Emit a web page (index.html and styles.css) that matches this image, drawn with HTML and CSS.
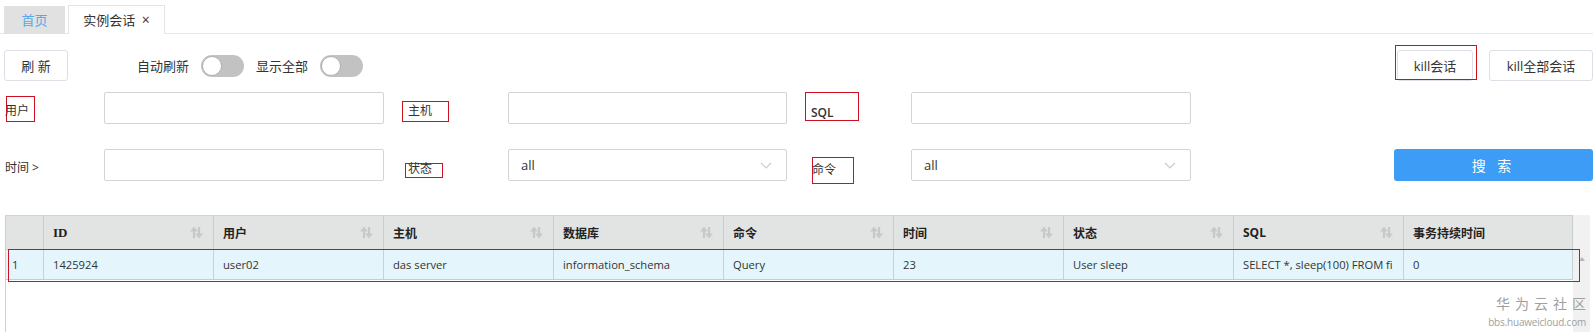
FILE: index.html
```html
<!DOCTYPE html>
<html lang="zh-CN">
<head>
    <meta charset="UTF-8">
    <title>实例会话</title>
    <link rel="stylesheet" href="styles.css">
</head>
<body>

    <!-- Tabs -->
    <div class="tabs">
        <div class="tab tab-home">首页</div>
        <div class="tab tab-active">实例会话 <span class="tab-close">×</span></div>
    </div>

    <!-- Toolbar -->
    <div class="toolbar">
        <button class="btn btn-refresh">刷 新</button>
        <div class="switches">
            <span class="switch-label">自动刷新</span>
            <span class="switch"><span class="knob"></span></span>
            <span class="switch-label">显示全部</span>
            <span class="switch"><span class="knob"></span></span>
        </div>
        <div class="toolbar-right">
            <span class="marked"><button class="btn btn-kill">kill会话</button></span>
            <button class="btn btn-kill-all">kill全部会话</button>
        </div>
    </div>

    <!-- Filters -->
    <div class="filters">
        <div class="filter-row">
            <div class="label-cell first"><span class="label mark lbl-user">用户</span></div>
            <input class="field" type="text">
            <div class="label-cell"><span class="label mark lbl-host">主机</span></div>
            <input class="field field-mid" type="text">
            <div class="label-cell"><span class="label mark lbl-sql">SQL</span></div>
            <input class="field" type="text">
        </div>
        <div class="filter-row">
            <div class="label-cell first"><span class="label lbl-time">时间 &gt;</span></div>
            <input class="field" type="text">
            <div class="label-cell"><span class="label mark lbl-state">状态</span></div>
            <div class="select field-mid"><span>all</span><svg class="chevron" width="12" height="7" viewBox="0 0 12 7"><path d="M1 1 L6 6 L11 1" fill="none" stroke="#c8cbd0" stroke-width="1.2"/></svg></div>
            <div class="label-cell"><span class="label mark lbl-cmd">命令</span></div>
            <div class="select"><span>all</span><svg class="chevron" width="12" height="7" viewBox="0 0 12 7"><path d="M1 1 L6 6 L11 1" fill="none" stroke="#c8cbd0" stroke-width="1.2"/></svg></div>
            <button class="btn-search">搜 索</button>
        </div>
    </div>

    <!-- Sessions table -->
    <div class="grid-wrap">
        <div class="grid">
            <div class="grid-row grid-head">
                <div class="cell"></div>
                <div class="cell sortable id-head">ID</div>
                <div class="cell sortable">用户</div>
                <div class="cell sortable">主机</div>
                <div class="cell sortable">数据库</div>
                <div class="cell sortable">命令</div>
                <div class="cell sortable">时间</div>
                <div class="cell sortable">状态</div>
                <div class="cell sortable">SQL</div>
                <div class="cell">事务持续时间</div>
            </div>
            <div class="grid-row grid-data">
                <div class="cell num">1</div>
                <div class="cell">1425924</div>
                <div class="cell">user02</div>
                <div class="cell">das server</div>
                <div class="cell">information_schema</div>
                <div class="cell">Query</div>
                <div class="cell">23</div>
                <div class="cell">User sleep</div>
                <div class="cell">SELECT *, sleep(100) FROM fi</div>
                <div class="cell">0</div>
            </div>
        </div>
        <div class="scrollbar"><span class="scroll-up"></span></div>
        <div class="watermark">
            <div class="wm-title">华为云社区</div>
            <div class="wm-url">bbs.huaweicloud.com</div>
        </div>
    </div>

    <script>
        // sort icons for sortable headers
        var icon = '<svg class="sort-icon" width="13" height="13" viewBox="0 0 13 13">' +
            '<path d="M4 4 V12" stroke="#c8c8c8" stroke-width="2.2"/><path d="M4 0.5 L0 5.5 H8 Z" fill="#c8c8c8"/>' +
            '<path d="M9 1 V9" stroke="#c8c8c8" stroke-width="2.2"/><path d="M9 12.5 L5 7.5 H13 Z" fill="#c8c8c8"/></svg>';
        document.querySelectorAll('.sortable').forEach(function (el) {
            el.insertAdjacentHTML('beforeend', icon);
        });
    </script>

</body>
</html>
```

FILE: styles.css
```css
/* Global */
body {
    margin: 0;
    padding: 0;
    font-family: "Open Sans", "Noto Sans CJK SC", sans-serif;
    font-size: 12px;
    color: #333;
    background: #fff;
}

button, input {
    font-family: inherit;
}

/* Tabs */
.tabs {
    display: flex;
    align-items: flex-end;
    height: 28px;
    padding: 5px 0 0 4px;
    margin-right: 3px;
    border-bottom: 1px solid #e6e6e6;
}

.tab {
    height: 28px;
    line-height: 28px;
    font-size: 13px;
    text-align: center;
    box-sizing: border-box;
    margin-bottom: -1px;
}

.tab-home {
    width: 61px;
    height: 28px;
    background: #e1e1e1;
    color: #5aa7e8;
}

.tab-active {
    width: 97px;
    height: 29px;
    margin-left: 3px;
    background: #fff;
    border: 1px solid #e4e4e4;
    border-bottom: none;
    color: #333;
}

.tab-close {
    margin-left: 3px;
    font-size: 14px;
}

/* Toolbar */
.toolbar {
    display: flex;
    align-items: center;
    height: 31px;
    margin-top: 16px;
    padding: 0 3px 0 4px;
}

.btn {
    height: 31px;
    background: #fff;
    border: 1px solid #dcdfe6;
    border-radius: 3px;
    color: #333;
    font-size: 13px;
    padding: 0;
    cursor: pointer;
}

.btn-refresh {
    width: 64px;
}

.switches {
    display: flex;
    align-items: center;
    margin-left: 69px;
}

.switch-label {
    font-size: 13px;
    margin-right: 12px;
}

.switch {
    position: relative;
    width: 43px;
    height: 22px;
    border-radius: 11px;
    background: #c2c2c2;
    margin-right: 12px;
}

.knob {
    position: absolute;
    top: 1px;
    left: 1px;
    width: 20px;
    height: 20px;
    box-sizing: border-box;
    border-radius: 50%;
    border: 1px solid #b0b0b0;
    background: #fff;
}

.toolbar-right {
    display: flex;
    align-items: center;
    margin-left: auto;
}

.marked {
    position: relative;
    display: flex;
}

.marked::after {
    content: "";
    position: absolute;
    left: -2px;
    top: -5px;
    right: -4px;
    bottom: 1px;
    border: 1px solid #cc1122;
}

.btn-kill {
    width: 76px;
}

.btn-kill-all {
    width: 104px;
    margin-left: 16px;
}

/* Filters */
.filters {
    margin-top: 11px;
    padding: 0 3px 0 4px;
}

.filter-row {
    display: flex;
    align-items: flex-start;
    height: 32px;
}

.filter-row + .filter-row {
    margin-top: 25px;
}

.label-cell {
    width: 124px;
    height: 32px;
    flex-shrink: 0;
}

.label-cell.first {
    width: 100px;
}

.label {
    display: block;
    box-sizing: border-box;
    font-size: 12px;
    line-height: 16px;
    color: #333;
    white-space: nowrap;
}

.mark {
    border: 1px solid #cc1122;
}

.lbl-user {
    width: 29px;
    height: 26px;
    margin: 4px 0 0 2px;
    padding-top: 6px;
    text-indent: -2px;
}

.lbl-host {
    width: 47px;
    height: 21px;
    margin: 9px 0 0 18px;
    padding: 1px 0 0 5px;
}

.lbl-sql {
    width: 54px;
    height: 29px;
    margin-left: 18px;
    padding: 12px 0 0 5px;
    font-weight: 600;
}

.lbl-time {
    margin: 11px 0 0 1px;
}

.lbl-state {
    width: 38px;
    height: 15px;
    margin: 14px 0 0 21px;
    padding-left: 2px;
    line-height: 10px;
}

.lbl-cmd {
    width: 42px;
    height: 27px;
    margin: 8px 0 0 25px;
    padding-top: 4px;
    text-indent: -1px;
}

.field {
    width: 280px;
    height: 32px;
    box-sizing: border-box;
    border: 1px solid #d4d4d4;
    border-radius: 2px;
    padding: 0 10px;
    flex-shrink: 0;
}

.field-mid {
    width: 279px;
}

.select {
    display: flex;
    align-items: center;
    justify-content: space-between;
    width: 280px;
    height: 32px;
    box-sizing: border-box;
    border: 1px solid #d4d4d4;
    border-radius: 2px;
    padding: 0 14px 0 12px;
    font-size: 13px;
    flex-shrink: 0;
}

.select.field-mid {
    width: 279px;
}

.btn-search {
    width: 199px;
    height: 32px;
    margin-left: auto;
    border: none;
    border-radius: 3px;
    background: #3d9cf5;
    color: #fff;
    font-size: 14px;
    letter-spacing: 4px;
    cursor: pointer;
}

/* Table */
.grid-wrap {
    position: relative;
    display: flex;
    margin: 34px 0 0 5px;
    width: 1586px;
    height: 117px;
    border-left: 1px solid #d0d0d0;
    box-sizing: border-box;
}

.grid {
    width: 1567px;
    border-top: 1px solid #d0d3d3;
}

.grid-row {
    display: grid;
    grid-template-columns: 38px repeat(8, 170px) 1fr;
    position: relative;
}

.cell {
    display: flex;
    align-items: center;
    justify-content: space-between;
    padding: 0 10px 0 9px;
    border-right: 1px solid #c9cdcd;
    white-space: nowrap;
    overflow: hidden;
}

.grid-head {
    height: 33px;
    background: #e2e4e4;
    border-bottom: 1px solid #cdd0d0;
    font-weight: bold;
    color: #222;
}

.id-head {
    font-family: "Liberation Serif", serif;
    font-size: 13px;
}

.sort-icon {
    flex-shrink: 0;
}

.grid-data {
    height: 29px;
    background: #e5f5fc;
    border-bottom: 1px solid #c6cdd0;
    font-size: 11.2px;
    z-index: 2;
}

.grid-data .cell {
    border-right-color: #c6d3d9;
    justify-content: flex-start;
}

.grid-data::after {
    content: "";
    position: absolute;
    left: 2px;
    top: -1px;
    width: 1572px;
    height: 33px;
    box-sizing: border-box;
    border: 1px solid #cc1122;
}

.cell.num {
    padding-left: 6px;
}

.scrollbar {
    position: relative;
    width: 17px;
    background: #f1f1f1;
}

.scroll-up {
    position: absolute;
    left: 6px;
    top: 42px;
    border-left: 3px solid transparent;
    border-right: 3px solid transparent;
    border-bottom: 4px solid #b8b8b8;
}

.watermark {
    position: absolute;
    right: 5px;
    top: 81px;
    color: #a0a0a0;
    text-align: right;
}

.wm-title {
    font-size: 14px;
    letter-spacing: 5px;
    line-height: 16px;
    margin-right: -5px;
}

.wm-url {
    font-size: 10px;
    line-height: 11px;
    margin-top: 5px;
    letter-spacing: -0.2px;
}
```
